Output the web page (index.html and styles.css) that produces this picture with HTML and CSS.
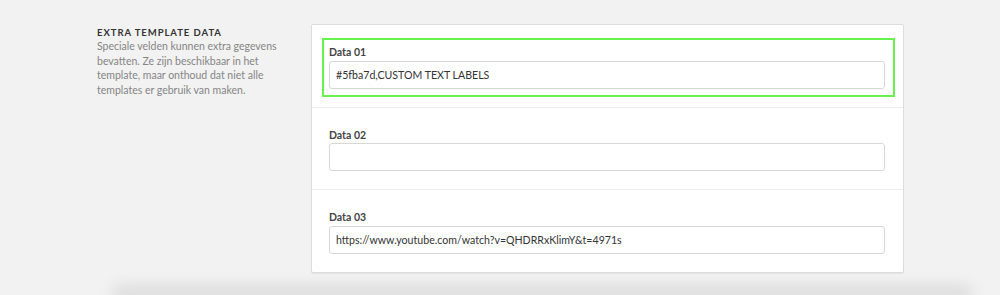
FILE: index.html
```html
<!DOCTYPE html>
<html>
<head>
<meta charset="utf-8">
<link rel="stylesheet" href="styles.css">
</head>
<body>
<main class="page">
  <section class="settings-row">
    <div class="intro">
      <h3 class="intro-title">Extra template data</h3>
      <p class="intro-text">Speciale velden kunnen extra gegevens bevatten. Ze zijn beschikbaar in het template, maar onthoud dat niet alle templates er gebruik van maken.</p>
    </div>
    <div class="card">
      <div class="field-section first">
        <div class="highlight">
          <label class="field-label">Data 01</label>
          <input class="field-input" type="text" value="#5fba7d,CUSTOM TEXT LABELS">
        </div>
      </div>
      <div class="field-section">
        <label class="field-label">Data 02</label>
        <input class="field-input" type="text" value="">
      </div>
      <div class="field-section last">
        <label class="field-label">Data 03</label>
        <input class="field-input gap2" type="text" value="https://www.youtube.com/watch?v=QHDRRxKlimY&amp;t=4971s">
      </div>
    </div>
  </section>
  <div class="next-panel"></div>
</main>
</body>
</html>
```

FILE: styles.css
```css
html, body {
  margin: 0;
  padding: 0;
  background: #f2f2f2;
  overflow: hidden;
}
body {
  font-family: Lato, "Open Sans", sans-serif;
  width: 1000px;
  height: 295px;
}
.page {
  padding-top: 24px;
}
.settings-row {
  display: grid;
  grid-template-columns: 190px 593px;
  column-gap: 24px;
  padding-left: 97px;
}
.intro-title {
  margin: 3px 0 0;
  font-size: 9.5px;
  font-weight: 700;
  letter-spacing: 0.95px;
  text-transform: uppercase;
  color: #333;
  line-height: 12px;
}
.intro-text {
  margin: 0;
  font-size: 10.5px;
  line-height: 14.5px;
  color: #858585;
}
.card {
  background: #fff;
  border: 1px solid #dcdcdc;
  border-radius: 2px;
  box-shadow: 0 1px 1px rgba(0,0,0,0.06);
  display: flex;
  flex-direction: column;
}
.field-section {
  display: flex;
  flex-direction: column;
  padding: 20px 18px 18px 17px;
  border-top: 1px solid #ececec;
}
.field-section.first {
  border-top: none;
  padding: 13px 8px 10px 10px;
}
.highlight {
  display: flex;
  flex-direction: column;
  border: 2px solid #66f24a;
  padding: 5px 8px 6px 5px;
}
.field-label {
  font-size: 10.5px;
  font-weight: 700;
  color: #444;
  line-height: 14px;
  margin-bottom: 1px;
}
.highlight .field-label {
  margin-bottom: 2px;
}
.field-input {
  box-sizing: border-box;
  height: 28px;
  width: 100%;
  border: 1px solid #d6d8d8;
  border-radius: 3px;
  padding: 0 6px;
  font-family: Lato, "Open Sans", sans-serif;
  font-size: 10.6px;
  color: #333;
  background: #fff;
  outline: none;
}
.field-input.gap2 {
  margin-top: 1px;
}
.next-panel {
  margin: 20px 35px 0 120px;
  height: 1px;
  background: #e2e2e2;
  box-shadow: 0 0 16px 7px rgba(0,0,0,0.1);
}
```
